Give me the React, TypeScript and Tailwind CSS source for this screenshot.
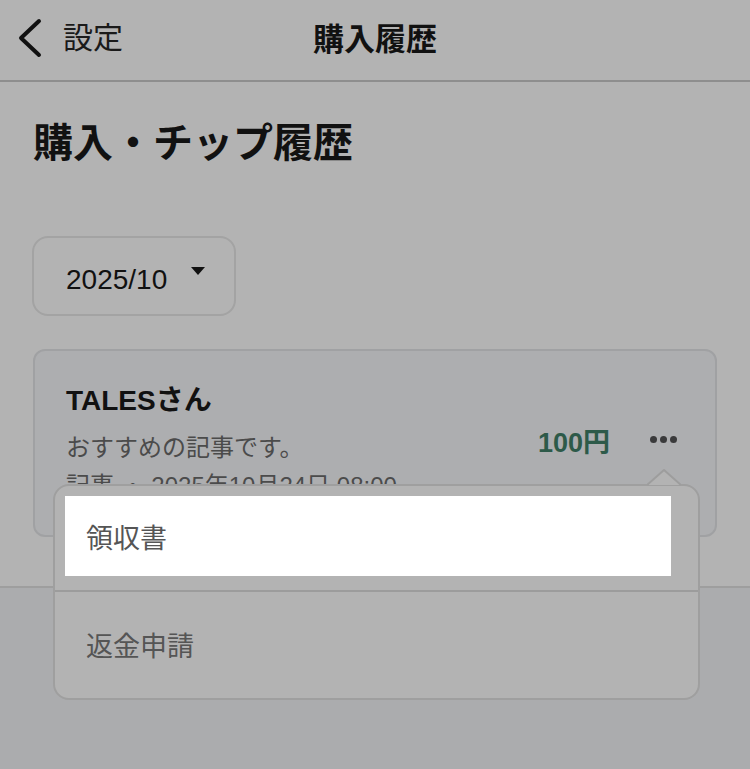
const jp = "font-['Liberation_Sans','Noto_Sans_CJK_JP',sans-serif]";

function Header() {
  return (
    <header className="relative flex h-[82px] items-center justify-center border-b-2 border-[#8e8e8e]">
      <div className="absolute left-[16px] top-[18px] flex items-center">
        <svg width="28" height="40" viewBox="0 0 28 40" fill="none">
          <path d="M23 3 L5 20 L23 37" stroke="#111" strokeWidth="4" strokeLinecap="round" strokeLinejoin="round" />
        </svg>
        <span className="ml-[19px] text-[30px] leading-[40px] text-[#1a1a1a]">設定</span>
      </div>
      <h1 className="text-[31px] font-bold leading-[40px] text-[#111]">購入履歴</h1>
    </header>
  );
}

function MonthSelect() {
  return (
    <div className="mt-[69px] ml-[-1px] flex h-[80px] w-[204px] items-center rounded-[16px] border-2 border-[#a3a3a3] pl-[32px] pt-[8px]">
      <span className="text-[28px] leading-[34px] text-[#111]">2025/10</span>
      <span className="ml-[24px] mb-[18px] h-0 w-0 border-x-[7.5px] border-t-[8px] border-x-transparent border-t-[#111]" />
    </div>
  );
}

function HistoryCard() {
  return (
    <div className="mt-[33px] flex h-[188px] w-[684px] items-center justify-between rounded-[12px] border-2 border-[#a0a1a3] bg-[#adaeb0] pl-[31px] pr-[38px]">
      <div className="self-start pt-[32px]">
        <div className="text-[28px] font-bold leading-[36px] text-[#111]">TALESさん</div>
        <div className="mt-[11px] text-[24px] leading-[36px] text-[#4b4b4b]">おすすめの記事です。</div>
        <div className="mt-[2px] text-[24px] leading-[36px] text-[#4b4b4b]">記事 ・ 2025年10月24日 08:00</div>
      </div>
      <div className="flex items-center gap-[40px]">
        <span className="text-[27px] font-bold leading-[36px] text-[#2d5a49]">100円</span>
        <span className="mb-[8px] flex gap-[3px]">
          <span className="h-[7px] w-[7px] rounded-full bg-[#3a3a3b]" />
          <span className="h-[7px] w-[7px] rounded-full bg-[#3a3a3b]" />
          <span className="h-[7px] w-[7px] rounded-full bg-[#3a3a3b]" />
        </span>
      </div>
    </div>
  );
}

function Popover() {
  return (
    <div className="absolute left-[53px] top-[484px] h-[216px] w-[647px]">
      <svg className="absolute left-[594px] top-[-15px]" width="34" height="18" viewBox="0 0 34 18">
        <path d="M0 16 L17 1 L34 16" fill="#b3b3b3" stroke="#9d9d9d" strokeWidth="2" />
      </svg>
      <div className="flex h-full flex-col rounded-[16px] border-2 border-[#9f9f9f] bg-[#b3b3b3]">
        <div className="h-[106px] border-b-2 border-[#9c9c9c] pl-[10px] pr-[27px] pt-[10px]">
          <div className="flex h-[80px] items-center bg-white pl-[21px] pt-[6px]">
            <span className="text-[27px] leading-[36px] text-[#555]">領収書</span>
          </div>
        </div>
        <div className="flex flex-1 items-center pl-[31px] pt-[4px]">
          <span className="text-[27px] leading-[36px] text-[#555]">返金申請</span>
        </div>
      </div>
    </div>
  );
}

export default function App() {
  return (
    <div className={`relative h-[769px] w-[750px] overflow-hidden bg-[#abacae] ${jp}`}>
      <div className="bg-[#b3b3b3]">
        <Header />
        <main className="border-b-2 border-[#9e9e9e] px-[33px] pb-[49px] pt-[37px]">
          <h2 className="text-[40px] font-bold leading-[48px] text-[#111]">購入・チップ履歴</h2>
          <MonthSelect />
          <HistoryCard />
        </main>
      </div>
      <Popover />
    </div>
  );
}
